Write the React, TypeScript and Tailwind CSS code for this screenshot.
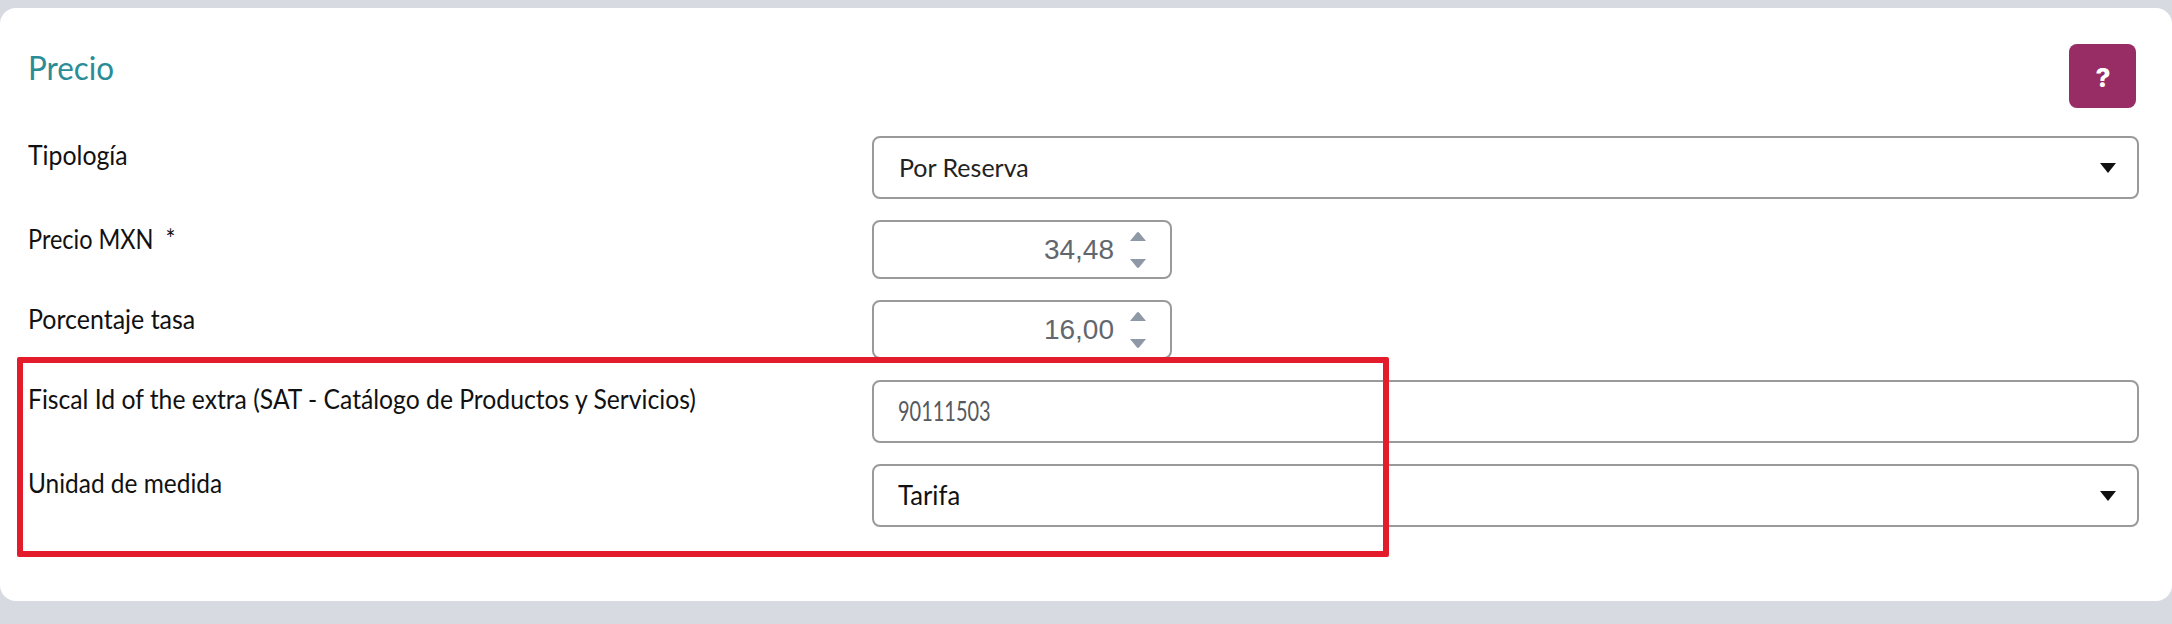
const labelFont = "font-['Lato','Liberation_Sans',sans-serif]";

function Caret() {
  return (
    <svg width="16" height="10" viewBox="0 0 16 10" className="shrink-0">
      <path d="M0 0H16L8 10Z" fill="#111" />
    </svg>
  );
}

function Spinner() {
  return (
    <div className="flex flex-col gap-[18px]">
      <svg width="16" height="9" viewBox="0 0 16 9">
        <path d="M0 9L7 .5Q8 -.3 9 .5L16 9Z" fill="#8f98a6" />
      </svg>
      <svg width="16" height="9" viewBox="0 0 16 9">
        <path d="M0 0L7 8.5Q8 9.3 9 8.5L16 0Z" fill="#8f98a6" />
      </svg>
    </div>
  );
}

function Narrow({ children, className = 'scale-x-[0.915]' }: { children: React.ReactNode; className?: string }) {
  return (
    <span className={`inline-block origin-left whitespace-pre ${labelFont} ${className}`}>
      {children}
    </span>
  );
}

function Row({ label, scale, children }: { label: string; scale?: string; children: React.ReactNode }) {
  return (
    <div className="flex">
      <div className="w-[844px] shrink-0 text-[27px] leading-[38px] text-[#111]">
        <Narrow className={scale}>{label}</Narrow>
      </div>
      <div className="min-w-0 flex-1">{children}</div>
    </div>
  );
}

function NumberBox({ value }: { value: string }) {
  return (
    <div className="flex h-[59px] w-[300px] items-center justify-end rounded-[8px] border-2 border-[#9a9a9a] pr-[24px]">
      <span className="mr-[16px] font-['Liberation_Sans',sans-serif] text-[28px] text-[#62676d]">{value}</span>
      <Spinner />
    </div>
  );
}

export default function App() {
  return (
    <div className="h-[624px] w-full overflow-hidden bg-[#d7dbe1] pt-[8px]">
      <div className="relative h-[593px] w-full rounded-[16px] bg-white pl-[28px] pr-[33px] pt-[36px]">
        <div className="flex h-[92px] items-start justify-between">
          <h2 className="pt-[1px] text-[33px] leading-[44px] text-[#2a8c96]">
            <Narrow className="scale-x-[0.95]">Precio</Narrow>
          </h2>
          <button className="mr-[3px] flex h-[64px] w-[67px] items-center justify-center rounded-[8px] bg-[#982c64] pl-[1px] pt-[2px] font-['Inter',sans-serif] text-[26px] font-extrabold text-white">
            ?
          </button>
        </div>

        <div className="flex flex-col gap-[21px]">
          <Row label="Tipología" scale="scale-x-[0.92]">
            <div className="flex h-[63px] items-center justify-between rounded-[8px] border-2 border-[#9a9a9a] pl-[25px] pr-[21px] pt-[1px] font-['Lato',sans-serif] text-[25px] text-[#222]">
              <span>Por Reserva</span>
              <Caret />
            </div>
          </Row>
          <Row label="Precio MXN  *" scale="scale-x-[0.87]">
            <NumberBox value="34,48" />
          </Row>
          <Row label="Porcentaje tasa" scale="scale-x-[0.925]">
            <NumberBox value="16,00" />
          </Row>
          <Row label="Fiscal Id of the extra (SAT - Catálogo de Productos y Servicios)">
            <div className="flex h-[63px] items-center rounded-[8px] border-2 border-[#9a9a9a] pl-[24px] text-[27px] text-[#555a60]">
              <Narrow className="scale-x-[0.74]">90111503</Narrow>
            </div>
          </Row>
          <Row label="Unidad de medida" scale="scale-x-[0.905]">
            <div className="flex h-[63px] items-center justify-between rounded-[8px] border-2 border-[#9a9a9a] pl-[24px] pr-[21px] text-[27px] text-[#111]">
              <Narrow className="scale-x-[0.95]">Tarifa</Narrow>
              <Caret />
            </div>
          </Row>
        </div>

        {/* red highlight drawn over the last two rows */}
        <div className="pointer-events-none absolute left-[17px] top-[349px] h-[200px] w-[1372px] rounded-[2px] border-[6px] border-[#e31b2b]" />
      </div>
    </div>
  );
}
